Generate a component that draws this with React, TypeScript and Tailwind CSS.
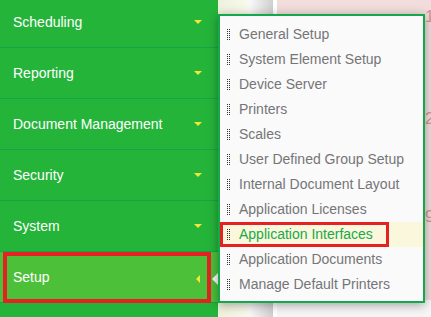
import React from "react";

const items = ["Scheduling", "Reporting", "Document Management", "Security", "System"];
const sub = [
  "General Setup",
  "System Element Setup",
  "Device Server",
  "Printers",
  "Scales",
  "User Defined Group Setup",
  "Internal Document Layout",
  "Application Licenses",
  "Application Interfaces",
  "Application Documents",
  "Manage Default Printers",
];

function Grip() {
  return (
    <svg width="4" height="11" viewBox="0 0 4 11" className="shrink-0">
      {[0, 2, 4, 6, 8, 10].map((y) => (
        <g key={y}>
          <rect x="0" y={y} width="1" height="1" fill="#333" />
          <rect x="2" y={y} width="1" height="1" fill="#333" />
        </g>
      ))}
    </svg>
  );
}

function CaretDown() {
  return (
    <svg width="8" height="4" viewBox="0 0 8 4">
      <polygon points="0,0 8,0 4,4" fill="#f2e63a" />
    </svg>
  );
}

export default function App() {
  return (
    <div
      className="relative w-[431px] h-[317px] overflow-hidden flex bg-white"
      style={{ fontFamily: '"Liberation Sans", Arial, sans-serif' }}
    >
      <div className="w-[218px] shrink-0 bg-[#25b43a] flex flex-col">
        <div className="-mt-[3px] flex flex-col">
          {items.map((t) => (
            <div
              key={t}
              className="h-[51px] shrink-0 border-b border-[#12a64a] flex items-center justify-between pl-[13px] pr-[16px]"
            >
              <span className="text-[14px] text-white">{t}</span>
              <CaretDown />
            </div>
          ))}
          <div className="h-[51px] shrink-0 border-b border-[#12a64a] bg-[#4dc03a] flex items-center justify-between pl-[13px] pr-[18px]">
            <span className="text-[14px] text-white">Setup</span>
            <svg width="4" height="8" viewBox="0 0 4 8" className="mt-[3px]">
              <polygon points="4,0 4,8 0,4" fill="#f2e63a" />
            </svg>
          </div>
        </div>
      </div>

      <div className="flex-1 flex">
        <div className="w-[31px] h-full bg-gradient-to-r from-[#eef2dc] to-[#f8faec]" />
        <div className="w-[24px] h-full bg-gradient-to-r from-[#fafafa] to-[#cfcfcf]" />
        <div className="w-[4px] h-full bg-white" />
        <div className="flex-1 flex flex-col">
          <div className="h-[300px] bg-[#f2dcdc] relative">
            <span className="absolute left-[148px] top-[4px] text-[17px] text-[#d49494]">15</span>
            <span className="absolute left-[148px] top-[106px] text-[17px] text-[#d49494]">2</span>
            <span className="absolute left-[148px] top-[204px] text-[17px] text-[#d49494]">9</span>
          </div>
          <div className="flex-1 bg-[#f6f6f6]" />
        </div>
      </div>

      {/* red annotation on Setup */}
      <div className="absolute left-[3px] top-[252px] w-[208px] h-[51px] border-4 border-[#e52222]" />

      {/* popover arrow */}
      <svg className="absolute left-[212px] top-[271px]" width="8" height="16" viewBox="0 0 8 16">
        <polygon points="8,0 8,16 0,8" fill="#fafafa" />
      </svg>

      {/* popover */}
      <div className="absolute left-[218px] top-[14px] w-[207px] h-[289px] border-2 border-[#13a84b] bg-[#fafafa] shadow-[0_2px_10px_rgba(0,0,0,0.35)] pt-[6px]">
        {sub.map((s) => {
          const active = s === "Application Interfaces";
          return (
            <div
              key={s}
              className={`h-[25px] flex items-center pl-[7px] ${active ? "bg-[#fbf7dc]" : ""}`}
            >
              <Grip />
              <span
                className={`ml-[8px] text-[14px] whitespace-nowrap ${active ? "text-[#17a94a]" : "text-[#757578]"}`}
              >
                {s}
              </span>
            </div>
          );
        })}
      </div>

      {/* red annotation on Application Interfaces */}
      <div className="absolute left-[220px] top-[222px] w-[169px] h-[25px] border-[3px] border-[#e52222]" />
    </div>
  );
}
